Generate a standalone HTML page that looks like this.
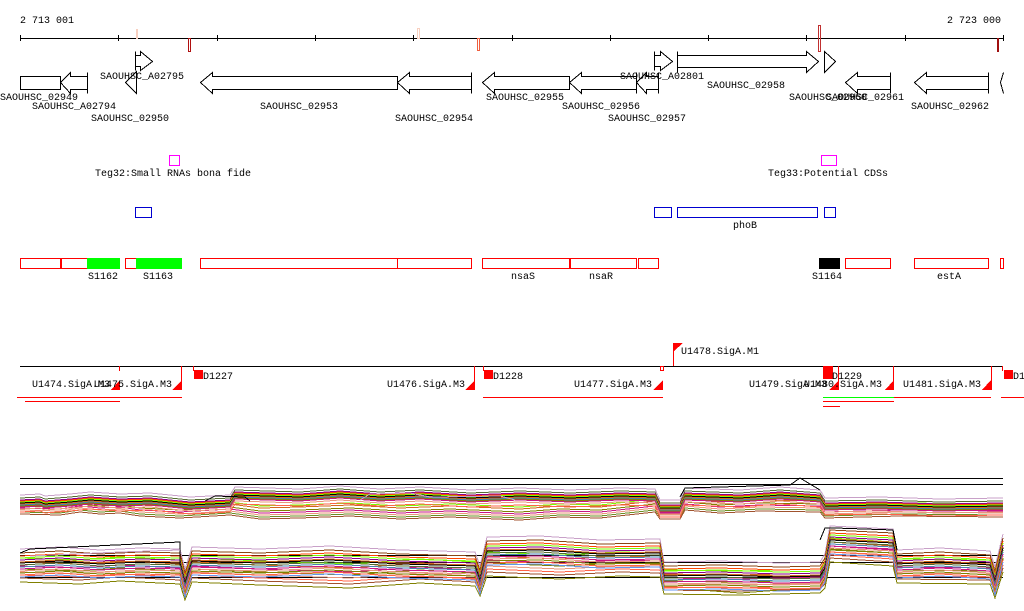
<!DOCTYPE html>
<html><head><meta charset="utf-8"><style>
html,body{margin:0;padding:0;background:#fff;}
svg{display:block;font-family:"Liberation Mono",monospace;font-size:10px;}
svg *{shape-rendering:crispEdges;}
text{text-rendering:optimizeSpeed;}
</style></head><body>
<svg width="1024" height="611" viewBox="0 0 1024 611" xmlns="http://www.w3.org/2000/svg">
<rect width="1024" height="611" fill="#fff"/>
<g fill="#000">
<text x="20" y="23">2 713 001</text>
<text x="947" y="23">2 723 000</text>
</g>
<g stroke="#000" stroke-width="1">
<line x1="20" y1="38.5" x2="1003" y2="38.5"/>
<path d="M20.5 35v6M118.5 35v6M217.5 35v6M315.5 35v6M413.5 35v6M512.5 35v6M610.5 35v6M708.5 35v6M806.5 35v6M905.5 35v6M1003.5 35v6"/>
</g>
<g fill="none">
<rect x="136.5" y="29.5" width="1" height="9" stroke="#f8d0c0"/>
<rect x="188.5" y="38.5" width="2" height="13" stroke="#b01010"/>
<rect x="417.5" y="28.5" width="2" height="10" stroke="#f8d0c0"/>
<rect x="477.5" y="38.5" width="2" height="12" stroke="#f06040"/>
<rect x="818.5" y="25.5" width="2" height="26" stroke="#c03030"/>
<rect x="997" y="38" width="2" height="14" fill="#a01010"/>
</g>
<g fill="#fff" stroke="#000" stroke-width="1">
<rect x="20.5" y="76.5" width="40" height="13"/>
<path d="M60.5 82.5L70.5 72.5V76.5H87.5V89.5H70.5V93.5Z"/>
<path d="M87.5 72.5V93.5"/>
<path d="M135.5 51.5V70.5M135.5 55.5H140.5V51.5L152.5 61.5L140.5 70.5V66.5H135.5"/>
<path d="M125.5 82.5L136.5 71.5V93.5Z"/>
<path d="M200.5 82.5L212.5 72.5V76.5H397.5V89.5H212.5V93.5Z"/>
<path d="M397.5 82.5L409.5 72.5V76.5H471.5V89.5H409.5V93.5Z"/>
<path d="M471.5 72.5V93.5"/>
<path d="M482.5 82.5L494.5 72.5V76.5H569.5V89.5H494.5V93.5Z"/>
<path d="M569.5 82.5L581.5 72.5V76.5H636.5V89.5H581.5V93.5Z"/>
<path d="M636.5 82.5L646.5 72.5V76.5H658.5V89.5H646.5V93.5Z"/>
<path d="M658.5 72.5V93.5M636.5 72.5V93.5"/>
<path d="M654.5 51.5V70.5M654.5 55.5H660.5V51.5L672.5 61.5L660.5 70.5V66.5H654.5"/>
<path d="M677.5 51.5V72.5M677.5 55.5H806.5V51.5L818.5 61.5L806.5 72.5V67.5H677.5Z"/>
<path d="M824.5 51.5L835.5 61.5L824.5 72.5Z"/>
<path d="M845.5 82.5L857.5 72.5V76.5H890.5V89.5H857.5V93.5Z"/>
<path d="M890.5 72.5V93.5"/>
<path d="M914.5 82.5L926.5 72.5V76.5H988.5V89.5H926.5V93.5Z"/>
<path d="M988.5 72.5V93.5"/>
<path d="M1003.5 72.5L1000.5 82.5L1003.5 93.5"/>
</g>
<g fill="#000">
<text x="0" y="100">SAOUHSC_02949</text>
<text x="32" y="109">SAOUHSC_A02794</text>
<text x="91" y="121">SAOUHSC_02950</text>
<text x="100" y="79">SAOUHSC_A02795</text>
<text x="260" y="109">SAOUHSC_02953</text>
<text x="395" y="121">SAOUHSC_02954</text>
<text x="486" y="100">SAOUHSC_02955</text>
<text x="562" y="109">SAOUHSC_02956</text>
<text x="608" y="121">SAOUHSC_02957</text>
<text x="620" y="79">SAOUHSC_A02801</text>
<text x="707" y="88">SAOUHSC_02958</text>
<text x="789" y="100">SAOUHSC_02960</text>
<text x="826" y="100">SAOUHSC_02961</text>
<text x="911" y="109">SAOUHSC_02962</text>
</g>
<g fill="none" stroke="#f0f">
<rect x="169.5" y="155.5" width="10" height="10"/>
<rect x="821.5" y="155.5" width="15" height="10"/>
</g>
<text x="95" y="176">Teg32:Small RNAs bona fide</text>
<text x="768" y="176">Teg33:Potential CDSs</text>
<g fill="none" stroke="#0000d0">
<rect x="135.5" y="207.5" width="16" height="10"/>
<rect x="654.5" y="207.5" width="17" height="10"/>
<rect x="677.5" y="207.5" width="140" height="10"/>
<rect x="824.5" y="207.5" width="11" height="10"/>
</g>
<text x="733" y="228">phoB</text>
<g>
<g fill="none" stroke="#f00">
<rect x="20.5" y="258.5" width="40" height="10"/>
<rect x="61.5" y="258.5" width="26" height="10"/>
<rect x="125.5" y="258.5" width="11" height="10"/>
<rect x="200.5" y="258.5" width="197" height="10"/>
<rect x="397.5" y="258.5" width="74" height="10"/>
<rect x="482.5" y="258.5" width="87" height="10"/>
<rect x="570.5" y="258.5" width="66" height="10"/>
<rect x="638.5" y="258.5" width="20" height="10"/>
<rect x="845.5" y="258.5" width="45" height="10"/>
<rect x="914.5" y="258.5" width="74" height="10"/>
<rect x="1000.5" y="258.5" width="3" height="10"/>
</g>
<rect x="87" y="258" width="33" height="11" fill="#0f0"/>
<rect x="136" y="258" width="46" height="11" fill="#0f0"/>
<rect x="819" y="258" width="21" height="11" fill="#000"/>
</g>
<g fill="#000">
<text x="88" y="279">S1162</text>
<text x="143" y="279">S1163</text>
<text x="511" y="279">nsaS</text>
<text x="589" y="279">nsaR</text>
<text x="812" y="279">S1164</text>
<text x="937" y="279">estA</text>
</g>
<line x1="20" y1="366.5" x2="1003" y2="366.5" stroke="#000"/>
<g fill="#f00">
<path d="M673 343h10l-9 8z"/>
<rect x="673" y="343" width="1" height="23"/>
<path d="M111 390h9v-10z"/><path d="M172 390h10v-10z"/><path d="M465 390h10v-10z"/>
<path d="M653 390h10v-10z"/><path d="M829 390h10v-10z"/><path d="M885 390h9v-10z"/>
<path d="M982 390h9v-10z"/>
<rect x="181" y="366" width="1" height="24"/><rect x="474" y="366" width="1" height="24"/>
<rect x="838" y="366" width="1" height="24"/><rect x="893" y="366" width="1" height="24"/>
<rect x="991" y="366" width="1" height="24"/>
<rect x="119" y="366" width="1" height="5"/><rect x="660.5" y="366.5" width="3" height="4" fill="none" stroke="#f00"/>
<rect x="194" y="370" width="9" height="9"/><rect x="484" y="370" width="9" height="9"/>
<rect x="823" y="366" width="10" height="13"/><rect x="1004" y="370" width="9" height="9"/>
<rect x="193" y="366" width="1" height="5"/><rect x="483" y="366" width="1" height="5"/><rect x="1002" y="366" width="1" height="5"/>
<rect x="17" y="397" width="165" height="1"/>
<rect x="25" y="401" width="95" height="1"/>
<rect x="483" y="397" width="180" height="1"/>
<rect x="823" y="397" width="71" height="1" fill="#0f0"/>
<rect x="823" y="401" width="71" height="1"/>
<rect x="823" y="406" width="17" height="1"/>
<rect x="894" y="397" width="97" height="1"/>
<rect x="1001" y="397" width="23" height="1"/>
</g>
<g fill="#000">
<text x="32" y="387">U1474.SigA.M3</text>
<text x="94" y="387">U1475.SigA.M3</text>
<text x="387" y="387">U1476.SigA.M3</text>
<text x="574" y="387">U1477.SigA.M3</text>
<text x="749" y="387">U1479.SigA.M3</text>
<text x="804" y="387">U1480.SigA.M3</text>
<text x="903" y="387">U1481.SigA.M3</text>
<text x="681" y="354">U1478.SigA.M1</text>
<text x="203" y="379">D1227</text>
<text x="493" y="379">D1228</text>
<text x="832" y="379">D1229</text>
<text x="1013" y="379">D1230</text>
</g>
<defs>
<path id="p1" fill="none" d="M20 503L40 502L45 504L70 502L90 500L120 502L150 501L190 505L230 503L235 495L300 497L340 494L380 497L420 495L470 498L520 496L570 498L620 496L655 497L660 508L680 508L685 496L740 498L780 495L820 498L825 506L880 505L940 507L1003 506"/>
<path id="q1" fill="none" d="M20 507L60 508L80 505L100 507L120 506L140 509L180 511L230 508L260 512L300 511L350 509L400 512L450 510L520 513L560 510L600 511L655 505L660 512L680 512L685 503L720 506L760 504L820 505L825 511L900 509L1003 510"/>
<path id="p2" fill="none" d="M20 565L60 563L100 566L140 564L180 565L185 585L192 563L260 565L330 562L400 566L475 568L480 582L487 553L540 552L600 556L660 555L664 578L720 577L780 579L820 578L825 570L830 542L893 545L897 566L940 564L990 567L995 583L1003 550"/>
<path id="q2" fill="none" d="M20 572L80 574L120 571L180 574L185 590L192 572L260 575L350 578L420 573L475 576L480 586L487 566L560 569L620 566L660 567L664 584L740 585L820 583L825 578L830 552L893 556L897 573L990 574L995 588L1003 562"/>
</defs>
<g stroke="#000">
<line x1="20" y1="478.5" x2="1003" y2="478.5"/>
<line x1="20" y1="484.5" x2="1003" y2="484.5"/>
<line x1="20" y1="555.5" x2="1003" y2="555.5"/>
<line x1="20" y1="562.5" x2="1003" y2="562.5"/>
<line x1="20" y1="577.5" x2="1003" y2="577.5"/>
</g>
<g stroke-width="1">
<use href="#p1" stroke="#c8a0c8" transform="translate(0,-8)"/>
<use href="#p1" stroke="#556b2f" transform="translate(0,-5)"/>
<use href="#q1" stroke="#7cfc00" transform="translate(0,-6)"/>
<use href="#p1" stroke="#8b008b" transform="translate(0,-3)"/>
<use href="#p1" stroke="#ff4500" transform="translate(0,-2)"/>
<use href="#q1" stroke="#d2691e" transform="translate(0,-4)"/>
<use href="#p1" stroke="#7cfc00" transform="translate(0,-1)"/>
<use href="#p1" stroke="#000" transform="translate(0,0)"/>
<use href="#q1" stroke="#808000" transform="translate(0,-1)"/>
<use href="#p1" stroke="#d2691e" transform="translate(0,1)"/>
<use href="#p1" stroke="#4682b4" transform="translate(0,2)"/>
<use href="#q1" stroke="#c71585" transform="translate(0,1)"/>
<use href="#p1" stroke="#808000" transform="translate(0,3)"/>
<use href="#p1" stroke="#c71585" transform="translate(0,4)"/>
<use href="#q1" stroke="#e9967a" transform="translate(0,3)"/>
<use href="#p1" stroke="#e9967a" transform="translate(0,6)"/>
<use href="#q1" stroke="#6b8e23" transform="translate(0,5)"/>
<use href="#p1" stroke="#ff6347" transform="translate(0,9)"/>
<use href="#q1" stroke="#a0522d" transform="translate(0,7)"/>
<path fill="none" stroke="#000" d="M680 497L685 488L790 485L800 478L820 490"/>
<path fill="none" stroke="#c8a0c8" d="M360 500L370 494L410 493L430 497L500 496L515 500"/>
<path fill="none" stroke="#000" d="M205 501L215 496L245 497L250 501"/>
<use href="#p2" stroke="#c8a0c8" transform="translate(0,-16)"/>
<use href="#p2" stroke="#8b4513" transform="translate(0,-12)"/>
<use href="#q2" stroke="#7cfc00" transform="translate(0,-14)"/>
<use href="#p2" stroke="#ff4500" transform="translate(0,-9)"/>
<use href="#q2" stroke="#d2691e" transform="translate(0,-10)"/>
<use href="#p2" stroke="#7cfc00" transform="translate(0,-7)"/>
<use href="#p2" stroke="#8b008b" transform="translate(0,-5)"/>
<use href="#q2" stroke="#c71585" transform="translate(0,-6)"/>
<use href="#p2" stroke="#d2691e" transform="translate(0,-3)"/>
<use href="#p2" stroke="#000" transform="translate(0,-2)"/>
<use href="#q2" stroke="#808000" transform="translate(0,-3)"/>
<use href="#p2" stroke="#556b2f" transform="translate(0,0)"/>
<use href="#p2" stroke="#4682b4" transform="translate(0,2)"/>
<use href="#q2" stroke="#e9967a" transform="translate(0,0)"/>
<use href="#p2" stroke="#c71585" transform="translate(0,4)"/>
<use href="#q2" stroke="#ff6347" transform="translate(0,3)"/>
<use href="#p2" stroke="#e9967a" transform="translate(0,6)"/>
<use href="#q2" stroke="#a0522d" transform="translate(0,6)"/>
<use href="#p2" stroke="#808000" transform="translate(0,8)"/>
<use href="#p2" stroke="#ff6347" transform="translate(0,10)"/>
<use href="#q2" stroke="#808000" transform="translate(0,10)"/>
<use href="#p2" stroke="#6495ed" transform="translate(0,12)"/>
<path fill="none" stroke="#000" d="M20 553L30 549L180 542V565"/>
<path fill="none" stroke="#c8a0c8" d="M30 556L120 552L180 550"/>
<path fill="none" stroke="#000" d="M820 540L825 528L835 528L893 530L897 550"/>
<path fill="none" stroke="#808000" d="M700 590L740 593L780 590"/>
</g>
</svg>
</body></html>
